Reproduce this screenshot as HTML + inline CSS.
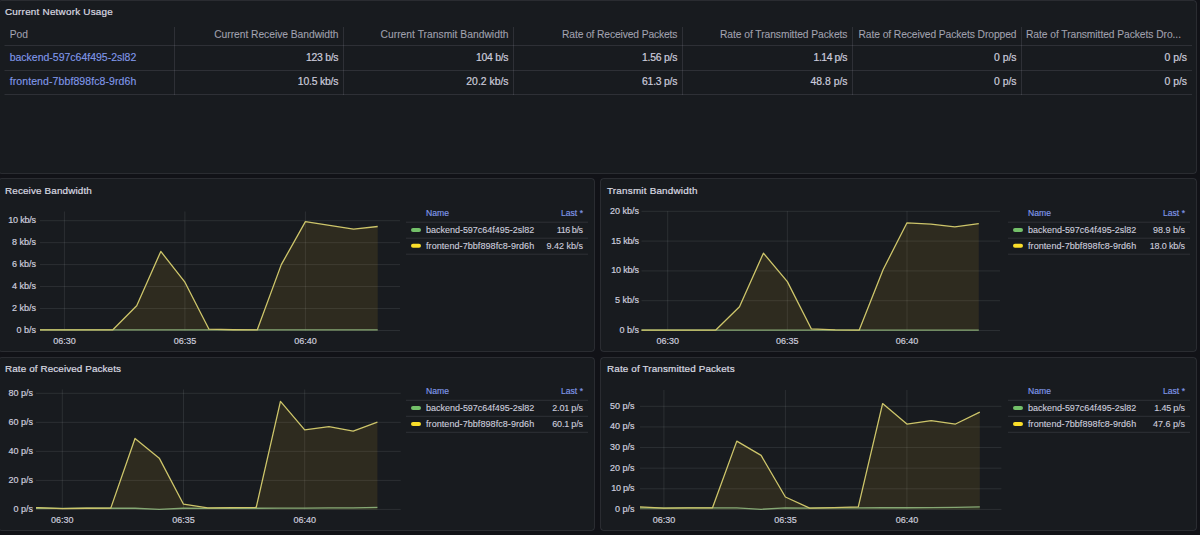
<!DOCTYPE html>
<html><head><meta charset="utf-8"><title>Network Usage</title>
<style>
html,body{margin:0;padding:0;background:#111217;width:1200px;height:535px;overflow:hidden;}
svg{display:block;font-family:"Liberation Sans", sans-serif;}
</style></head><body>
<svg width="1200" height="535" viewBox="0 0 1200 535">
<rect x="-1.5" y="0.5" width="1198" height="173" rx="3" ry="3" fill="#181b1f" stroke="rgba(204,204,220,0.12)" stroke-width="1"/>
<rect x="-1.5" y="178.5" width="596" height="173" rx="3" ry="3" fill="#181b1f" stroke="rgba(204,204,220,0.12)" stroke-width="1"/>
<rect x="600.5" y="178.5" width="596" height="173" rx="3" ry="3" fill="#181b1f" stroke="rgba(204,204,220,0.12)" stroke-width="1"/>
<rect x="-1.5" y="357.5" width="596" height="173" rx="3" ry="3" fill="#181b1f" stroke="rgba(204,204,220,0.12)" stroke-width="1"/>
<rect x="600.5" y="357.5" width="596" height="173" rx="3" ry="3" fill="#181b1f" stroke="rgba(204,204,220,0.12)" stroke-width="1"/>
<text x="5" y="15" font-size="9.9" fill="#d8d9e0" text-anchor="start" font-weight="400" stroke="#d8d9e0" stroke-width="0.22" textLength="107.8" lengthAdjust="spacing">Current Network Usage</text>
<rect x="4.5" y="45" width="1187.5" height="1" fill="rgba(204,204,220,0.12)"/>
<rect x="4.5" y="70" width="1187.5" height="1" fill="rgba(204,204,220,0.12)"/>
<rect x="4.5" y="94" width="1187.5" height="1" fill="rgba(204,204,220,0.12)"/>
<rect x="174" y="27" width="1" height="68" fill="rgba(204,204,220,0.12)"/>
<rect x="343" y="27" width="1" height="68" fill="rgba(204,204,220,0.12)"/>
<rect x="513" y="27" width="1" height="68" fill="rgba(204,204,220,0.12)"/>
<rect x="682" y="27" width="1" height="68" fill="rgba(204,204,220,0.12)"/>
<rect x="852" y="27" width="1" height="68" fill="rgba(204,204,220,0.12)"/>
<rect x="1021" y="27" width="1" height="68" fill="rgba(204,204,220,0.12)"/>
<text x="9.7" y="37.5" font-size="10.27" fill="rgba(204,204,220,0.72)" text-anchor="start" font-weight="400" stroke="rgba(204,204,220,0.72)" stroke-width="0.15">Pod</text>
<text x="338.5" y="37.5" font-size="10.27" fill="rgba(204,204,220,0.72)" text-anchor="end" font-weight="400" stroke="rgba(204,204,220,0.72)" stroke-width="0.15" textLength="124.3" lengthAdjust="spacing">Current Receive Bandwidth</text>
<text x="508.5" y="37.5" font-size="10.27" fill="rgba(204,204,220,0.72)" text-anchor="end" font-weight="400" stroke="rgba(204,204,220,0.72)" stroke-width="0.15" textLength="128.0" lengthAdjust="spacing">Current Transmit Bandwidth</text>
<text x="677.5" y="37.5" font-size="10.27" fill="rgba(204,204,220,0.72)" text-anchor="end" font-weight="400" stroke="rgba(204,204,220,0.72)" stroke-width="0.15" textLength="115.5" lengthAdjust="spacing">Rate of Received Packets</text>
<text x="847.5" y="37.5" font-size="10.27" fill="rgba(204,204,220,0.72)" text-anchor="end" font-weight="400" stroke="rgba(204,204,220,0.72)" stroke-width="0.15" textLength="127.5" lengthAdjust="spacing">Rate of Transmitted Packets</text>
<text x="1016.5" y="37.5" font-size="10.27" fill="rgba(204,204,220,0.72)" text-anchor="end" font-weight="400" stroke="rgba(204,204,220,0.72)" stroke-width="0.15" textLength="158.0" lengthAdjust="spacing">Rate of Received Packets Dropped</text>
<text x="1026" y="37.5" font-size="10.27" fill="rgba(204,204,220,0.72)" text-anchor="start" font-weight="400" stroke="rgba(204,204,220,0.72)" stroke-width="0.15" textLength="155" lengthAdjust="spacing">Rate of Transmitted Packets Dro...</text>
<text x="9.7" y="61.3" font-size="10.5" fill="#8199ea" text-anchor="start" font-weight="400" stroke="#8199ea" stroke-width="0.12" textLength="126.6" lengthAdjust="spacing">backend-597c64f495-2sl82</text>
<text x="338.5" y="61.3" font-size="10.4" fill="#ccccdc" text-anchor="end" font-weight="400" stroke="#ccccdc" stroke-width="0.2" textLength="32.59" lengthAdjust="spacing">123 b/s</text>
<text x="508.5" y="61.3" font-size="10.4" fill="#ccccdc" text-anchor="end" font-weight="400" stroke="#ccccdc" stroke-width="0.2" textLength="32.59" lengthAdjust="spacing">104 b/s</text>
<text x="677.5" y="61.3" font-size="10.4" fill="#ccccdc" text-anchor="end" font-weight="400" stroke="#ccccdc" stroke-width="0.2" textLength="35.48" lengthAdjust="spacing">1.56 p/s</text>
<text x="847.5" y="61.3" font-size="10.4" fill="#ccccdc" text-anchor="end" font-weight="400" stroke="#ccccdc" stroke-width="0.2" textLength="33.97" lengthAdjust="spacing">1.14 p/s</text>
<text x="1016.5" y="61.3" font-size="10.4" fill="#ccccdc" text-anchor="end" font-weight="400" stroke="#ccccdc" stroke-width="0.2">0 p/s</text>
<text x="1187" y="61.3" font-size="10.4" fill="#ccccdc" text-anchor="end" font-weight="400" stroke="#ccccdc" stroke-width="0.2">0 p/s</text>
<text x="9.7" y="84.7" font-size="10.5" fill="#8199ea" text-anchor="start" font-weight="400" stroke="#8199ea" stroke-width="0.12" textLength="126.6" lengthAdjust="spacing">frontend-7bbf898fc8-9rd6h</text>
<text x="338.5" y="84.7" font-size="10.4" fill="#ccccdc" text-anchor="end" font-weight="400" stroke="#ccccdc" stroke-width="0.2" textLength="40.66" lengthAdjust="spacing">10.5 kb/s</text>
<text x="508.5" y="84.7" font-size="10.4" fill="#ccccdc" text-anchor="end" font-weight="400" stroke="#ccccdc" stroke-width="0.2">20.2 kb/s</text>
<text x="677.5" y="84.7" font-size="10.4" fill="#ccccdc" text-anchor="end" font-weight="400" stroke="#ccccdc" stroke-width="0.2" textLength="35.48" lengthAdjust="spacing">61.3 p/s</text>
<text x="847.5" y="84.7" font-size="10.4" fill="#ccccdc" text-anchor="end" font-weight="400" stroke="#ccccdc" stroke-width="0.2">48.8 p/s</text>
<text x="1016.5" y="84.7" font-size="10.4" fill="#ccccdc" text-anchor="end" font-weight="400" stroke="#ccccdc" stroke-width="0.2">0 p/s</text>
<text x="1187" y="84.7" font-size="10.4" fill="#ccccdc" text-anchor="end" font-weight="400" stroke="#ccccdc" stroke-width="0.2">0 p/s</text>
<text x="5" y="193.8" font-size="9.9" fill="#d8d9e0" text-anchor="start" font-weight="400" stroke="#d8d9e0" stroke-width="0.22" textLength="86.8" lengthAdjust="spacing">Receive Bandwidth</text>
<rect x="40" y="330.0" width="360" height="1" fill="rgba(240,250,255,0.09)"/>
<text x="36" y="332.9" font-size="9" fill="#ccccdc" text-anchor="end" font-weight="400" stroke="#ccccdc" stroke-width="0.2">0 b/s</text>
<rect x="40" y="308.04" width="360" height="1" fill="rgba(240,250,255,0.09)"/>
<text x="36" y="310.94" font-size="9" fill="#ccccdc" text-anchor="end" font-weight="400" stroke="#ccccdc" stroke-width="0.2">2 kb/s</text>
<rect x="40" y="286.08" width="360" height="1" fill="rgba(240,250,255,0.09)"/>
<text x="36" y="288.97999999999996" font-size="9" fill="#ccccdc" text-anchor="end" font-weight="400" stroke="#ccccdc" stroke-width="0.2">4 kb/s</text>
<rect x="40" y="264.12" width="360" height="1" fill="rgba(240,250,255,0.09)"/>
<text x="36" y="267.02" font-size="9" fill="#ccccdc" text-anchor="end" font-weight="400" stroke="#ccccdc" stroke-width="0.2">6 kb/s</text>
<rect x="40" y="242.16" width="360" height="1" fill="rgba(240,250,255,0.09)"/>
<text x="36" y="245.06" font-size="9" fill="#ccccdc" text-anchor="end" font-weight="400" stroke="#ccccdc" stroke-width="0.2">8 kb/s</text>
<rect x="40" y="220.2" width="360" height="1" fill="rgba(240,250,255,0.09)"/>
<text x="36" y="223.1" font-size="9" fill="#ccccdc" text-anchor="end" font-weight="400" stroke="#ccccdc" stroke-width="0.2" textLength="27.73" lengthAdjust="spacing">10 kb/s</text>
<rect x="63.900000000000006" y="211.5" width="1" height="119.0" fill="rgba(240,250,255,0.09)"/>
<text x="64.4" y="343.9" font-size="9" fill="#ccccdc" text-anchor="middle" font-weight="400" stroke="#ccccdc" stroke-width="0.2">06:30</text>
<rect x="184.4" y="211.5" width="1" height="119.0" fill="rgba(240,250,255,0.09)"/>
<text x="184.9" y="343.9" font-size="9" fill="#ccccdc" text-anchor="middle" font-weight="400" stroke="#ccccdc" stroke-width="0.2">06:35</text>
<rect x="304.9" y="211.5" width="1" height="119.0" fill="rgba(240,250,255,0.09)"/>
<text x="305.4" y="343.9" font-size="9" fill="#ccccdc" text-anchor="middle" font-weight="400" stroke="#ccccdc" stroke-width="0.2">06:40</text>
<clipPath id="c-2_178"><rect x="40" y="209.5" width="360" height="123.0"/></clipPath>
<g clip-path="url(#c-2_178)">
<path d="M16.20,329.95 L40.30,329.95 L64.40,329.95 L88.50,329.95 L112.60,329.95 L136.70,305.69 L160.80,251.44 L184.90,282.19 L209.00,329.18 L233.10,329.73 L257.20,329.95 L281.30,264.62 L305.40,221.58 L329.50,225.31 L353.60,229.04 L377.70,226.52 L377.70,330.50 L16.20,330.50 Z" fill="#fabe2a" fill-opacity="0.1"/>
<path d="M16.20,329.95 L40.30,329.95 L64.40,329.95 L88.50,329.95 L112.60,329.95 L136.70,329.95 L160.80,329.95 L184.90,329.95 L209.00,329.95 L233.10,329.95 L257.20,329.95 L281.30,329.95 L305.40,329.95 L329.50,329.95 L353.60,329.95 L377.70,329.95 L377.70,330.50 L16.20,330.50 Z" fill="#73bf69" fill-opacity="0.1"/>
<path d="M16.20,329.95 L40.30,329.95 L64.40,329.95 L88.50,329.95 L112.60,329.95 L136.70,329.95 L160.80,329.95 L184.90,329.95 L209.00,329.95 L233.10,329.95 L257.20,329.95 L281.30,329.95 L305.40,329.95 L329.50,329.95 L353.60,329.95 L377.70,329.95" fill="none" stroke="#86a874" stroke-width="1.3" stroke-linejoin="round"/>
<path d="M16.20,329.95 L40.30,329.95 L64.40,329.95 L88.50,329.95 L112.60,329.95 L136.70,305.69 L160.80,251.44 L184.90,282.19 L209.00,329.18 L233.10,329.73 L257.20,329.95 L281.30,264.62 L305.40,221.58 L329.50,225.31 L353.60,229.04 L377.70,226.52" fill="none" stroke="#cdc56a" stroke-width="1.3" stroke-linejoin="round"/>
</g>
<text x="426" y="216" font-size="8.6" fill="#8199ea" text-anchor="start" font-weight="400" stroke="#8199ea" stroke-width="0.15">Name</text>
<text x="583" y="216" font-size="8.6" fill="#8199ea" text-anchor="end" font-weight="400" stroke="#8199ea" stroke-width="0.15">Last *</text>
<rect x="406" y="221.7" width="182" height="1" fill="rgba(204,204,220,0.12)"/>
<rect x="406" y="237.7" width="182" height="1" fill="rgba(204,204,220,0.12)"/>
<rect x="406" y="253.7" width="182" height="1" fill="rgba(204,204,220,0.12)"/>
<rect x="411" y="228.0" width="10" height="4" rx="2" fill="#73bf69"/>
<text x="426" y="233.2" font-size="9" fill="#ccccdc" text-anchor="start" font-weight="400" stroke="#ccccdc" stroke-width="0.12" textLength="108.2" lengthAdjust="spacing">backend-597c64f495-2sl82</text>
<text x="583" y="233.2" font-size="9" fill="#ccccdc" text-anchor="end" font-weight="400" stroke="#ccccdc" stroke-width="0.12" textLength="26.25" lengthAdjust="spacing">116 b/s</text>
<rect x="411" y="243.8" width="10" height="4" rx="2" fill="#fade2a"/>
<text x="426" y="249.0" font-size="9" fill="#ccccdc" text-anchor="start" font-weight="400" stroke="#ccccdc" stroke-width="0.12" textLength="108.2" lengthAdjust="spacing">frontend-7bbf898fc8-9rd6h</text>
<text x="583" y="249.0" font-size="9" fill="#ccccdc" text-anchor="end" font-weight="400" stroke="#ccccdc" stroke-width="0.12">9.42 kb/s</text>
<text x="607" y="193.8" font-size="9.9" fill="#d8d9e0" text-anchor="start" font-weight="400" stroke="#d8d9e0" stroke-width="0.22" textLength="90.4" lengthAdjust="spacing">Transmit Bandwidth</text>
<rect x="641.5" y="330.0" width="358.5" height="1" fill="rgba(240,250,255,0.09)"/>
<text x="639" y="332.9" font-size="9" fill="#ccccdc" text-anchor="end" font-weight="400" stroke="#ccccdc" stroke-width="0.2">0 b/s</text>
<rect x="641.5" y="300.2" width="358.5" height="1" fill="rgba(240,250,255,0.09)"/>
<text x="639" y="303.09999999999997" font-size="9" fill="#ccccdc" text-anchor="end" font-weight="400" stroke="#ccccdc" stroke-width="0.2">5 kb/s</text>
<rect x="641.5" y="270.4" width="358.5" height="1" fill="rgba(240,250,255,0.09)"/>
<text x="639" y="273.29999999999995" font-size="9" fill="#ccccdc" text-anchor="end" font-weight="400" stroke="#ccccdc" stroke-width="0.2" textLength="27.73" lengthAdjust="spacing">10 kb/s</text>
<rect x="641.5" y="240.60000000000002" width="358.5" height="1" fill="rgba(240,250,255,0.09)"/>
<text x="639" y="243.50000000000003" font-size="9" fill="#ccccdc" text-anchor="end" font-weight="400" stroke="#ccccdc" stroke-width="0.2" textLength="27.73" lengthAdjust="spacing">15 kb/s</text>
<rect x="641.5" y="210.8" width="358.5" height="1" fill="rgba(240,250,255,0.09)"/>
<text x="639" y="213.70000000000002" font-size="9" fill="#ccccdc" text-anchor="end" font-weight="400" stroke="#ccccdc" stroke-width="0.2">20 kb/s</text>
<rect x="667.2" y="211.2" width="1" height="119.30000000000001" fill="rgba(240,250,255,0.09)"/>
<text x="667.7" y="343.9" font-size="9" fill="#ccccdc" text-anchor="middle" font-weight="400" stroke="#ccccdc" stroke-width="0.2">06:30</text>
<rect x="786.85" y="211.2" width="1" height="119.30000000000001" fill="rgba(240,250,255,0.09)"/>
<text x="787.35" y="343.9" font-size="9" fill="#ccccdc" text-anchor="middle" font-weight="400" stroke="#ccccdc" stroke-width="0.2">06:35</text>
<rect x="906.5" y="211.2" width="1" height="119.30000000000001" fill="rgba(240,250,255,0.09)"/>
<text x="907.0" y="343.9" font-size="9" fill="#ccccdc" text-anchor="middle" font-weight="400" stroke="#ccccdc" stroke-width="0.2">06:40</text>
<clipPath id="c600_178"><rect x="641.5" y="209.2" width="358.5" height="123.30000000000001"/></clipPath>
<g clip-path="url(#c600_178)">
<path d="M619.84,330.20 L643.77,330.20 L667.70,330.20 L691.63,330.20 L715.56,330.20 L739.49,306.84 L763.42,253.14 L787.35,281.63 L811.28,328.83 L835.21,329.78 L859.14,330.20 L883.07,269.71 L907.00,222.80 L930.93,224.17 L954.86,226.97 L978.79,223.58 L978.79,330.50 L619.84,330.50 Z" fill="#fabe2a" fill-opacity="0.1"/>
<path d="M619.84,330.20 L643.77,330.20 L667.70,330.20 L691.63,330.20 L715.56,330.20 L739.49,330.20 L763.42,330.20 L787.35,330.20 L811.28,330.20 L835.21,330.20 L859.14,330.20 L883.07,330.20 L907.00,330.20 L930.93,330.20 L954.86,330.20 L978.79,330.20 L978.79,330.50 L619.84,330.50 Z" fill="#73bf69" fill-opacity="0.1"/>
<path d="M619.84,330.20 L643.77,330.20 L667.70,330.20 L691.63,330.20 L715.56,330.20 L739.49,330.20 L763.42,330.20 L787.35,330.20 L811.28,330.20 L835.21,330.20 L859.14,330.20 L883.07,330.20 L907.00,330.20 L930.93,330.20 L954.86,330.20 L978.79,330.20" fill="none" stroke="#86a874" stroke-width="1.3" stroke-linejoin="round"/>
<path d="M619.84,330.20 L643.77,330.20 L667.70,330.20 L691.63,330.20 L715.56,330.20 L739.49,306.84 L763.42,253.14 L787.35,281.63 L811.28,328.83 L835.21,329.78 L859.14,330.20 L883.07,269.71 L907.00,222.80 L930.93,224.17 L954.86,226.97 L978.79,223.58" fill="none" stroke="#cdc56a" stroke-width="1.3" stroke-linejoin="round"/>
</g>
<text x="1028" y="216" font-size="8.6" fill="#8199ea" text-anchor="start" font-weight="400" stroke="#8199ea" stroke-width="0.15">Name</text>
<text x="1185" y="216" font-size="8.6" fill="#8199ea" text-anchor="end" font-weight="400" stroke="#8199ea" stroke-width="0.15">Last *</text>
<rect x="1008" y="221.7" width="182" height="1" fill="rgba(204,204,220,0.12)"/>
<rect x="1008" y="237.7" width="182" height="1" fill="rgba(204,204,220,0.12)"/>
<rect x="1008" y="253.7" width="182" height="1" fill="rgba(204,204,220,0.12)"/>
<rect x="1013" y="228.0" width="10" height="4" rx="2" fill="#73bf69"/>
<text x="1028" y="233.2" font-size="9" fill="#ccccdc" text-anchor="start" font-weight="400" stroke="#ccccdc" stroke-width="0.12" textLength="108.2" lengthAdjust="spacing">backend-597c64f495-2sl82</text>
<text x="1185" y="233.2" font-size="9" fill="#ccccdc" text-anchor="end" font-weight="400" stroke="#ccccdc" stroke-width="0.12">98.9 b/s</text>
<rect x="1013" y="243.8" width="10" height="4" rx="2" fill="#fade2a"/>
<text x="1028" y="249.0" font-size="9" fill="#ccccdc" text-anchor="start" font-weight="400" stroke="#ccccdc" stroke-width="0.12" textLength="108.2" lengthAdjust="spacing">frontend-7bbf898fc8-9rd6h</text>
<text x="1185" y="249.0" font-size="9" fill="#ccccdc" text-anchor="end" font-weight="400" stroke="#ccccdc" stroke-width="0.12" textLength="35.23" lengthAdjust="spacing">18.0 kb/s</text>
<text x="5" y="371.90000000000003" font-size="9.9" fill="#d8d9e0" text-anchor="start" font-weight="400" stroke="#d8d9e0" stroke-width="0.22" textLength="116.0" lengthAdjust="spacing">Rate of Received Packets</text>
<rect x="36" y="508.9" width="364.7" height="1" fill="rgba(240,250,255,0.09)"/>
<text x="33" y="511.79999999999995" font-size="9" fill="#ccccdc" text-anchor="end" font-weight="400" stroke="#ccccdc" stroke-width="0.2">0 p/s</text>
<rect x="36" y="479.875" width="364.7" height="1" fill="rgba(240,250,255,0.09)"/>
<text x="33" y="482.775" font-size="9" fill="#ccccdc" text-anchor="end" font-weight="400" stroke="#ccccdc" stroke-width="0.2">20 p/s</text>
<rect x="36" y="450.85" width="364.7" height="1" fill="rgba(240,250,255,0.09)"/>
<text x="33" y="453.75" font-size="9" fill="#ccccdc" text-anchor="end" font-weight="400" stroke="#ccccdc" stroke-width="0.2">40 p/s</text>
<rect x="36" y="421.825" width="364.7" height="1" fill="rgba(240,250,255,0.09)"/>
<text x="33" y="424.72499999999997" font-size="9" fill="#ccccdc" text-anchor="end" font-weight="400" stroke="#ccccdc" stroke-width="0.2">60 p/s</text>
<rect x="36" y="392.8" width="364.7" height="1" fill="rgba(240,250,255,0.09)"/>
<text x="33" y="395.7" font-size="9" fill="#ccccdc" text-anchor="end" font-weight="400" stroke="#ccccdc" stroke-width="0.2">80 p/s</text>
<rect x="61.8" y="389.5" width="1" height="119.89999999999998" fill="rgba(240,250,255,0.09)"/>
<text x="62.3" y="522.8" font-size="9" fill="#ccccdc" text-anchor="middle" font-weight="400" stroke="#ccccdc" stroke-width="0.2">06:30</text>
<rect x="183.0" y="389.5" width="1" height="119.89999999999998" fill="rgba(240,250,255,0.09)"/>
<text x="183.5" y="522.8" font-size="9" fill="#ccccdc" text-anchor="middle" font-weight="400" stroke="#ccccdc" stroke-width="0.2">06:35</text>
<rect x="304.2" y="389.5" width="1" height="119.89999999999998" fill="rgba(240,250,255,0.09)"/>
<text x="304.7" y="522.8" font-size="9" fill="#ccccdc" text-anchor="middle" font-weight="400" stroke="#ccccdc" stroke-width="0.2">06:40</text>
<clipPath id="c-2_357"><rect x="36" y="387.5" width="364.7" height="123.89999999999998"/></clipPath>
<g clip-path="url(#c-2_357)">
<path d="M13.82,507.08 L38.06,507.66 L62.30,508.53 L86.54,508.24 L110.78,508.09 L135.02,438.43 L159.26,458.17 L183.50,504.18 L207.74,507.95 L231.98,507.66 L256.22,507.37 L280.46,401.43 L304.70,429.87 L328.94,426.68 L353.18,431.18 L377.42,422.18 L377.42,509.40 L13.82,509.40 Z" fill="#fabe2a" fill-opacity="0.1"/>
<path d="M13.82,508.24 L38.06,508.24 L62.30,508.38 L86.54,508.24 L110.78,508.24 L135.02,508.24 L159.26,509.33 L183.50,508.24 L207.74,508.38 L231.98,508.24 L256.22,508.24 L280.46,508.09 L304.70,508.09 L328.94,507.95 L353.18,507.80 L377.42,507.37 L377.42,509.40 L13.82,509.40 Z" fill="#73bf69" fill-opacity="0.1"/>
<path d="M13.82,508.24 L38.06,508.24 L62.30,508.38 L86.54,508.24 L110.78,508.24 L135.02,508.24 L159.26,509.33 L183.50,508.24 L207.74,508.38 L231.98,508.24 L256.22,508.24 L280.46,508.09 L304.70,508.09 L328.94,507.95 L353.18,507.80 L377.42,507.37" fill="none" stroke="#86a874" stroke-width="1.3" stroke-linejoin="round"/>
<path d="M13.82,507.08 L38.06,507.66 L62.30,508.53 L86.54,508.24 L110.78,508.09 L135.02,438.43 L159.26,458.17 L183.50,504.18 L207.74,507.95 L231.98,507.66 L256.22,507.37 L280.46,401.43 L304.70,429.87 L328.94,426.68 L353.18,431.18 L377.42,422.18" fill="none" stroke="#cdc56a" stroke-width="1.3" stroke-linejoin="round"/>
</g>
<text x="426" y="394.1" font-size="8.6" fill="#8199ea" text-anchor="start" font-weight="400" stroke="#8199ea" stroke-width="0.15">Name</text>
<text x="583" y="394.1" font-size="8.6" fill="#8199ea" text-anchor="end" font-weight="400" stroke="#8199ea" stroke-width="0.15">Last *</text>
<rect x="406" y="399.8" width="182" height="1" fill="rgba(204,204,220,0.12)"/>
<rect x="406" y="415.8" width="182" height="1" fill="rgba(204,204,220,0.12)"/>
<rect x="406" y="431.8" width="182" height="1" fill="rgba(204,204,220,0.12)"/>
<rect x="411" y="406.1" width="10" height="4" rx="2" fill="#73bf69"/>
<text x="426" y="411.3" font-size="9" fill="#ccccdc" text-anchor="start" font-weight="400" stroke="#ccccdc" stroke-width="0.12" textLength="108.2" lengthAdjust="spacing">backend-597c64f495-2sl82</text>
<text x="583" y="411.3" font-size="9" fill="#ccccdc" text-anchor="end" font-weight="400" stroke="#ccccdc" stroke-width="0.12" textLength="30.73" lengthAdjust="spacing">2.01 p/s</text>
<rect x="411" y="421.90000000000003" width="10" height="4" rx="2" fill="#fade2a"/>
<text x="426" y="427.1" font-size="9" fill="#ccccdc" text-anchor="start" font-weight="400" stroke="#ccccdc" stroke-width="0.12" textLength="108.2" lengthAdjust="spacing">frontend-7bbf898fc8-9rd6h</text>
<text x="583" y="427.1" font-size="9" fill="#ccccdc" text-anchor="end" font-weight="400" stroke="#ccccdc" stroke-width="0.12" textLength="30.73" lengthAdjust="spacing">60.1 p/s</text>
<text x="607" y="371.90000000000003" font-size="9.9" fill="#d8d9e0" text-anchor="start" font-weight="400" stroke="#d8d9e0" stroke-width="0.22" textLength="127.6" lengthAdjust="spacing">Rate of Transmitted Packets</text>
<rect x="640" y="508.9" width="361.4" height="1" fill="rgba(240,250,255,0.09)"/>
<text x="634.5" y="511.79999999999995" font-size="9" fill="#ccccdc" text-anchor="end" font-weight="400" stroke="#ccccdc" stroke-width="0.2">0 p/s</text>
<rect x="640" y="488.28" width="361.4" height="1" fill="rgba(240,250,255,0.09)"/>
<text x="634.5" y="491.17999999999995" font-size="9" fill="#ccccdc" text-anchor="end" font-weight="400" stroke="#ccccdc" stroke-width="0.2" textLength="23.23" lengthAdjust="spacing">10 p/s</text>
<rect x="640" y="467.65999999999997" width="361.4" height="1" fill="rgba(240,250,255,0.09)"/>
<text x="634.5" y="470.55999999999995" font-size="9" fill="#ccccdc" text-anchor="end" font-weight="400" stroke="#ccccdc" stroke-width="0.2">20 p/s</text>
<rect x="640" y="447.03999999999996" width="361.4" height="1" fill="rgba(240,250,255,0.09)"/>
<text x="634.5" y="449.93999999999994" font-size="9" fill="#ccccdc" text-anchor="end" font-weight="400" stroke="#ccccdc" stroke-width="0.2">30 p/s</text>
<rect x="640" y="426.42" width="361.4" height="1" fill="rgba(240,250,255,0.09)"/>
<text x="634.5" y="429.32" font-size="9" fill="#ccccdc" text-anchor="end" font-weight="400" stroke="#ccccdc" stroke-width="0.2">40 p/s</text>
<rect x="640" y="405.8" width="361.4" height="1" fill="rgba(240,250,255,0.09)"/>
<text x="634.5" y="408.7" font-size="9" fill="#ccccdc" text-anchor="end" font-weight="400" stroke="#ccccdc" stroke-width="0.2">50 p/s</text>
<rect x="663.4" y="390" width="1" height="119.39999999999998" fill="rgba(240,250,255,0.09)"/>
<text x="663.9" y="522.8" font-size="9" fill="#ccccdc" text-anchor="middle" font-weight="400" stroke="#ccccdc" stroke-width="0.2">06:30</text>
<rect x="784.9" y="390" width="1" height="119.39999999999998" fill="rgba(240,250,255,0.09)"/>
<text x="785.4" y="522.8" font-size="9" fill="#ccccdc" text-anchor="middle" font-weight="400" stroke="#ccccdc" stroke-width="0.2">06:35</text>
<rect x="906.4" y="390" width="1" height="119.39999999999998" fill="rgba(240,250,255,0.09)"/>
<text x="906.9" y="522.8" font-size="9" fill="#ccccdc" text-anchor="middle" font-weight="400" stroke="#ccccdc" stroke-width="0.2">06:40</text>
<clipPath id="c600_357"><rect x="640" y="388" width="361.4" height="123.39999999999998"/></clipPath>
<g clip-path="url(#c600_357)">
<path d="M615.30,506.72 L639.60,506.93 L663.90,508.16 L688.20,507.96 L712.50,507.75 L736.80,441.15 L761.10,455.38 L785.40,497.03 L809.70,508.16 L834.00,507.54 L858.30,506.93 L882.60,403.62 L906.90,424.03 L931.20,420.53 L955.50,424.03 L979.80,412.07 L979.80,509.40 L615.30,509.40 Z" fill="#fabe2a" fill-opacity="0.1"/>
<path d="M615.30,507.96 L639.60,507.96 L663.90,508.16 L688.20,507.96 L712.50,507.96 L736.80,507.96 L761.10,509.30 L785.40,507.96 L809.70,508.16 L834.00,507.96 L858.30,507.96 L882.60,507.75 L906.90,507.75 L931.20,507.54 L955.50,507.34 L979.80,506.93 L979.80,509.40 L615.30,509.40 Z" fill="#73bf69" fill-opacity="0.1"/>
<path d="M615.30,507.96 L639.60,507.96 L663.90,508.16 L688.20,507.96 L712.50,507.96 L736.80,507.96 L761.10,509.30 L785.40,507.96 L809.70,508.16 L834.00,507.96 L858.30,507.96 L882.60,507.75 L906.90,507.75 L931.20,507.54 L955.50,507.34 L979.80,506.93" fill="none" stroke="#86a874" stroke-width="1.3" stroke-linejoin="round"/>
<path d="M615.30,506.72 L639.60,506.93 L663.90,508.16 L688.20,507.96 L712.50,507.75 L736.80,441.15 L761.10,455.38 L785.40,497.03 L809.70,508.16 L834.00,507.54 L858.30,506.93 L882.60,403.62 L906.90,424.03 L931.20,420.53 L955.50,424.03 L979.80,412.07" fill="none" stroke="#cdc56a" stroke-width="1.3" stroke-linejoin="round"/>
</g>
<text x="1028" y="394.1" font-size="8.6" fill="#8199ea" text-anchor="start" font-weight="400" stroke="#8199ea" stroke-width="0.15">Name</text>
<text x="1185" y="394.1" font-size="8.6" fill="#8199ea" text-anchor="end" font-weight="400" stroke="#8199ea" stroke-width="0.15">Last *</text>
<rect x="1008" y="399.8" width="182" height="1" fill="rgba(204,204,220,0.12)"/>
<rect x="1008" y="415.8" width="182" height="1" fill="rgba(204,204,220,0.12)"/>
<rect x="1008" y="431.8" width="182" height="1" fill="rgba(204,204,220,0.12)"/>
<rect x="1013" y="406.1" width="10" height="4" rx="2" fill="#73bf69"/>
<text x="1028" y="411.3" font-size="9" fill="#ccccdc" text-anchor="start" font-weight="400" stroke="#ccccdc" stroke-width="0.12" textLength="108.2" lengthAdjust="spacing">backend-597c64f495-2sl82</text>
<text x="1185" y="411.3" font-size="9" fill="#ccccdc" text-anchor="end" font-weight="400" stroke="#ccccdc" stroke-width="0.12" textLength="30.73" lengthAdjust="spacing">1.45 p/s</text>
<rect x="1013" y="421.90000000000003" width="10" height="4" rx="2" fill="#fade2a"/>
<text x="1028" y="427.1" font-size="9" fill="#ccccdc" text-anchor="start" font-weight="400" stroke="#ccccdc" stroke-width="0.12" textLength="108.2" lengthAdjust="spacing">frontend-7bbf898fc8-9rd6h</text>
<text x="1185" y="427.1" font-size="9" fill="#ccccdc" text-anchor="end" font-weight="400" stroke="#ccccdc" stroke-width="0.12">47.6 p/s</text>
</svg>
</body></html>
